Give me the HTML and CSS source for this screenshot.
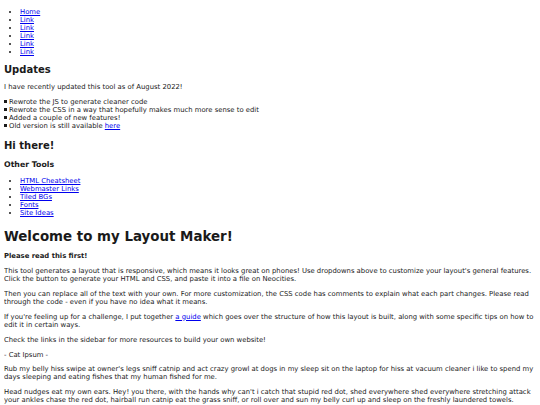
FILE: index.html
```html
<!DOCTYPE html>
<html lang="en">
<head>
  <meta charset="UTF-8">
  <title>Layout Maker</title>
  <link rel="stylesheet" href="styles.css">
</head>
<body>

  <ul class="nav">
    <li><a href="#">Home</a></li>
    <li><a href="#">Link</a></li>
    <li><a href="#">Link</a></li>
    <li><a href="#">Link</a></li>
    <li><a href="#">Link</a></li>
    <li><a href="#">Link</a></li>
  </ul>

  <div class="sidebar">
    <h2>Updates</h2>
    <p>I have recently updated this tool as of August 2022!</p>
    <ul class="updates">
      <li>Rewrote the JS to generate cleaner code</li>
      <li>Rewrote the CSS in a way that hopefully makes much more sense to edit</li>
      <li>Added a couple of new features!</li>
      <li>Old version is still available <a href="#">here</a></li>
    </ul>

    <h2>Hi there!</h2>
    <h3>Other Tools</h3>
    <ul class="tools">
      <li><a href="#">HTML Cheatsheet</a></li>
      <li><a href="#">Webmaster Links</a></li>
      <li><a href="#">Tiled BGs</a></li>
      <li><a href="#">Fonts</a></li>
      <li><a href="#">Site Ideas</a></li>
    </ul>
  </div>

  <main>
    <h1>Welcome to my Layout Maker!</h1>
    <h4>Please read this first!</h4>
    <p>This tool generates a layout that is responsive, which means it looks great on phones! Use dropdowns above to customize your layout's general features. Click the button to generate your HTML and CSS, and paste it into a file on Neocities.</p>
    <p>Then you can replace all of the text with your own. For more customization, the CSS code has comments to explain what each part changes. Please read through the code - even if you have no idea what it means.</p>
    <p>If you're feeling up for a challenge, I put together <a href="#">a guide</a> which goes over the structure of how this layout is built, along with some specific tips on how to edit it in certain ways.</p>
    <p>Check the links in the sidebar for more resources to build your own website!</p>
    <p>- Cat Ipsum -</p>
    <p>Rub my belly hiss swipe at owner's legs sniff catnip and act crazy growl at dogs in my sleep sit on the laptop for hiss at vacuum cleaner i like to spend my days sleeping and eating fishes that my human fished for me.</p>
    <p>Head nudges eat my own ears. Hey! you there, with the hands why can't i catch that stupid red dot, shed everywhere shed everywhere stretching attack your ankles chase the red dot, hairball run catnip eat the grass sniff, or roll over and sun my belly curl up and sleep on the freshly laundered towels.</p>
  </main>

</body>
</html>
```

FILE: styles.css
```css
body {
  font-family: "DejaVu Sans", Verdana, sans-serif;
  font-size: 6.85px;
  margin: 4px;
  color: #1a1a1a;
  background: #fff;
}

a {
  color: #0000ee;
}

ul {
  margin: 4px 0;
  padding-left: 16px;
}

.updates {
  margin: 2px 0 10px;
  padding-left: 4px;
  list-style: none;
}

.updates li {
  display: flex;
  align-items: center;
  margin-left: -4px;
}

.updates li::before {
  content: "";
  flex: none;
  width: 3px;
  height: 3px;
  margin-right: 2px;
  background: #1a1a1a;
}

.updates li a {
  margin-left: 0.3em;
}

h1 {
  font-size: 13.4px;
  margin: 12px 0 8px;
}

h2 {
  font-size: 10px;
  margin: 8px 0;
}

h3 {
  font-size: 7.8px;
  margin: 9px 0 8px;
}

h4 {
  font-size: 6.85px;
  margin: 8px 0 5px;
}

p {
  margin: 6.85px 0;
}

main p {
  line-height: 1.18;
}
```
